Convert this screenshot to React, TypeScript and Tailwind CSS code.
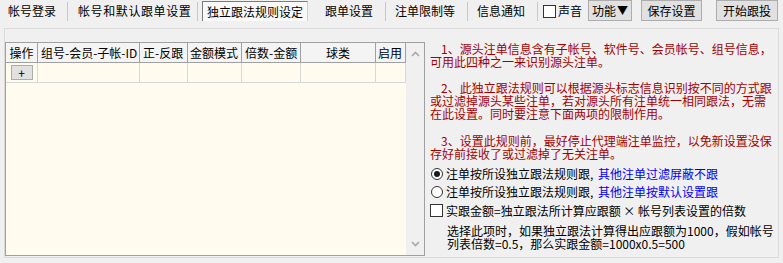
import React from "react";

function Sep() {
  return <div className="w-[1px] h-[19px] mt-[2px] bg-[#c8c8c8]" />;
}

function Chevron({ up }: { up?: boolean }) {
  return (
    <svg width="9" height="6" viewBox="0 0 9 6" className="block">
      <path
        d={up ? "M1 5 L4.5 1.5 L8 5" : "M1 1 L4.5 4.5 L8 1"}
        fill="none"
        stroke="#a8a8a8"
        strokeWidth="1.6"
      />
    </svg>
  );
}

const cols = [
  { w: "w-[32px]", label: "操作", c: "justify-center" },
  { w: "w-[102px]", label: "组号-会员-子帐-ID", c: "pl-[3px]" },
  { w: "w-[48px]", label: "正-反跟", c: "pl-[3px]" },
  { w: "w-[54px]", label: "金额模式", c: "pl-[2px]" },
  { w: "w-[59px]", label: "倍数-金额", c: "pl-[3px]" },
  { w: "w-[75px]", label: "球类", c: "justify-center" },
  { w: "w-[30px]", label: "启用", c: "pl-[2px]" },
];

export default function App() {
  return (
    <div className="w-[783px] h-[263px] bg-[#f0f0f0] overflow-hidden text-[12px] text-black font-['Noto_Sans_CJK_SC','Noto_Sans',sans-serif] leading-none">
      {/* tab strip */}
      <div className="h-[28px] flex items-start">
        <div className="w-[67px] h-[22px] flex items-center pl-[8px] whitespace-nowrap">帐号登录</div>
        <Sep />
        <div className="w-[129px] h-[22px] flex items-center pl-[10px] whitespace-nowrap tracking-[0.6px]">帐号和默认跟单设置</div>
        <Sep />
        <div className="ml-[4px] w-[106px] h-[20px] mt-[1px] flex items-center justify-center bg-[#f9f9f9] border-t border-l border-r border-t-[#7a7a7a] border-l-[#7a7a7a] border-r-[#cfcfcf] whitespace-nowrap">
          独立跟法规则设定
        </div>
        <div className="w-[77px] h-[22px] flex items-center pl-[17px] whitespace-nowrap">跟单设置</div>
        <Sep />
        <div className="w-[81px] h-[22px] flex items-center pl-[9px] whitespace-nowrap">注单限制等</div>
        <Sep />
        <div className="w-[69px] h-[22px] flex items-center pl-[9px] whitespace-nowrap">信息通知</div>
        <Sep />
        <div className="ml-[5px] mt-[5px] w-[13px] h-[13px] border border-[#333333] bg-white" />
        <div className="ml-[2px] h-[22px] flex items-center whitespace-nowrap">声音</div>
        <div className="ml-[6px] w-[44px] h-[21px] flex items-center justify-center bg-[#e1e1e1] border border-[#adadad] whitespace-nowrap">
          功能<span className="text-[11px] ml-[1px]">▼</span>
        </div>
        <div className="ml-[9px] w-[61px] h-[21px] flex items-center justify-center bg-[#e1e1e1] border border-[#adadad] whitespace-nowrap">保存设置</div>
        <div className="ml-[14px] w-[62px] h-[21px] flex items-center justify-center bg-[#e1e1e1] border border-[#adadad] whitespace-nowrap">开始跟投</div>
      </div>

      {/* panel */}
      <div className="ml-[4px] w-[775px] h-[230px] border border-[#dadada] flex">
        {/* grid */}
        <div className="mt-[13px] w-[420px] h-[214px] border border-[#a0a0a0] flex">
          <div className="w-[400px] h-full flex flex-col bg-[#fffbee]">
            <div className="h-[20px] flex bg-[#f4f4f4] border-b border-[#a0a0a0]">
              {cols.map((c) => (
                <div key={c.label} className={`${c.w} h-full border-r border-[#a0a0a0] flex items-center whitespace-nowrap ${c.c}`}>
                  {c.label}
                </div>
              ))}
            </div>
            <div className="h-[20px] flex border-b border-[#d8d8d8]">
              {cols.map((c, i) => (
                <div key={c.label} className={`${c.w} h-full border-r border-[#d8d8d8] flex items-center justify-center`}>
                  {i === 0 ? (
                    <div className="w-[22px] h-[15px] bg-[#e1e1e1] border border-[#adadad] flex items-center justify-center text-[12px]">+</div>
                  ) : null}
                </div>
              ))}
            </div>
          </div>
          <div className="flex-1 flex flex-col justify-between items-center py-[8px] bg-[#f0f0f0]">
            <Chevron up />
            <Chevron />
          </div>
        </div>

        {/* right text */}
        <div className="ml-[5px] pt-[13px] flex flex-col whitespace-nowrap">
          <div className="text-[#a40000] leading-[13px]">
            <div className="pl-[11px]">1、源头注单信息含有子帐号、软件号、会员帐号、组号信息，</div>
            <div>可用此四种之一来识别源头注单。</div>
            <div className="h-[13px]" />
            <div className="pl-[11px]">2、此独立跟法规则可以根据源头标志信息识别按不同的方式跟</div>
            <div>或过滤掉源头某些注单，若对源头所有注单统一相同跟法，无需</div>
            <div>在此设置。同时要注意下面两项的限制作用。</div>
            <div className="h-[14px]" />
            <div className="pl-[11px]">3、设置此规则前，最好停止代理端注单监控，以免新设置没保</div>
            <div>存好前接收了或过滤掉了无关注单。</div>
          </div>
          <div className="mt-[5px] h-[18px] flex items-center">
            <div className="ml-[1px] w-[12px] h-[12px] rounded-full border border-[#333333] bg-white flex items-center justify-center">
              <div className="w-[6px] h-[6px] rounded-full bg-[#1a1a1a]" />
            </div>
            <span className="ml-[3px]">注单按所设独立跟法规则跟</span>
            <span className="inline-block w-[8px]">,</span>
            <span className="text-[#0000f0]">其他注单过滤屏蔽不跟</span>
          </div>
          <div className="h-[18px] flex items-center">
            <div className="ml-[1px] w-[12px] h-[12px] rounded-full border border-[#333333] bg-white" />
            <span className="ml-[3px]">注单按所设独立跟法规则跟</span>
            <span className="inline-block w-[8px]">,</span>
            <span className="text-[#0000f0]">其他注单按默认设置跟</span>
          </div>
          <div className="h-[19px] flex items-center">
            <div className="w-[13px] h-[13px] border border-[#333333] bg-white" />
            <span className="ml-[3px]">实跟金额=独立跟法所计算应跟额 × 帐号列表设置的倍数</span>
          </div>
          <div className="mt-[4px] pl-[17px] leading-[13px]">
            <div>选择此项时，如果独立跟法计算得出应跟额为1000，假如帐号</div>
            <div>列表倍数=0.5，那么实跟金额=1000x0.5=500</div>
          </div>
        </div>
      </div>
    </div>
  );
}
